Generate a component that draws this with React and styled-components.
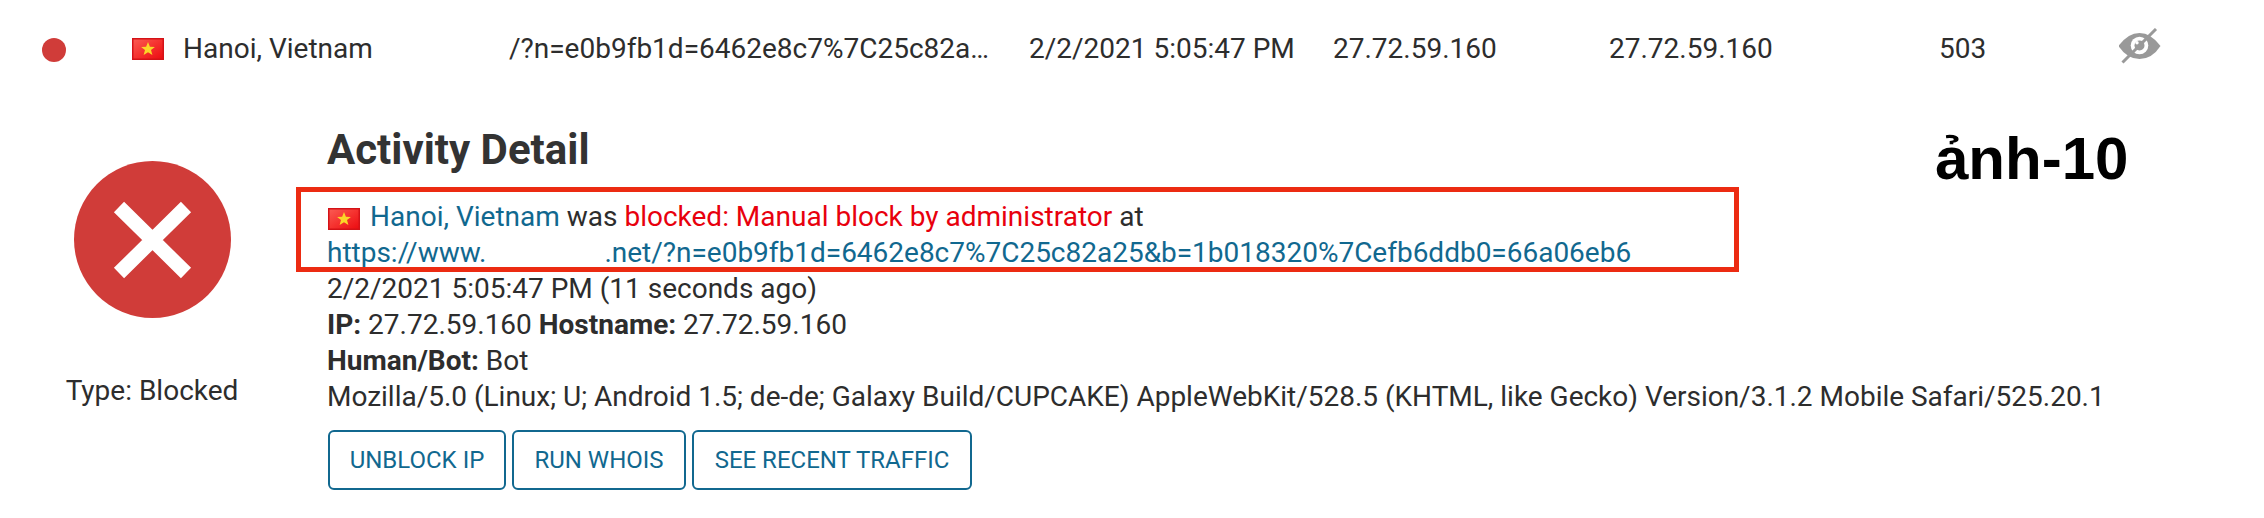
import React from "react";
import styled, { createGlobalStyle } from "styled-components";

const Global = createGlobalStyle`
  * { box-sizing: border-box; }
  body { margin: 0; background: #fff; }
`;

const Page = styled.main`
  position: relative;
  width: 2264px;
  height: 518px;
  overflow: hidden;
  background: #fff;
  color: #2d2d2d;
  font: 400 28px/36px Roboto, "Liberation Sans", sans-serif;
`;

const HitRow = styled.div`
  display: grid;
  grid-template-columns: 90px 377px 520px 304px 276px 330px 180px 1fr;
  align-items: center;
  height: 98px;
  padding-left: 42px;
`;

const Cell = styled.div`
  display: flex;
  align-items: center;
  gap: ${(p) => p.$gap || 0}px;
  white-space: nowrap;
`;

const Dot = styled.span`
  width: 24px;
  height: 24px;
  margin-top: 2px;
  border-radius: 50%;
  background: #d03c39;
`;

const FlagSvg = styled.svg`
  display: inline-block;
  width: 32px;
  height: 22px;
  flex: none;
  margin: ${(p) => p.$margin || "0"};
  vertical-align: -4px;
`;

const EyeSvg = styled.svg`
  width: 44px;
  height: 36px;
  margin-bottom: 6px;
`;

const DetailPanel = styled.section`
  display: flex;
`;

const TypeColumn = styled.aside`
  display: flex;
  flex-direction: column;
  align-items: center;
  width: 304px;
  padding-top: 63px;
`;

const BlockedSvg = styled.svg`
  width: 157px;
  height: 157px;
  margin-bottom: 55px;
`;

const Details = styled.div`
  padding: 27px 0 0 23px;
`;

const Title = styled.h2`
  margin: 0 0 24px;
  font-size: 42px;
  line-height: 50px;
  font-weight: 700;
  color: #333;
`;

const Line = styled.div`
  height: 36px;
  letter-spacing: ${(p) => p.$tracking || "normal"};
  white-space: nowrap;
`;

const Link = styled.a`
  color: #11688f;
`;

const Blocked = styled.span`
  color: #e8000d;
`;

const Redacted = styled.span`
  display: inline-block;
  width: 118px;
`;

const Actions = styled.div`
  display: flex;
  gap: 6px;
  margin: 15px 0 0 1px;
`;

const ActionButton = styled.button`
  width: ${(p) => p.$width}px;
  height: 60px;
  padding: 0;
  border: 2px solid #11688f;
  border-radius: 6px;
  background: #fff;
  color: #11688f;
  font: 400 24px/36px Roboto, sans-serif;
  text-transform: uppercase;
  white-space: nowrap;
`;

const Highlight = styled.div`
  position: absolute;
  left: 296px;
  top: 187px;
  width: 1443px;
  height: 85px;
  border: 5px solid #ec2b12;
`;

const Caption = styled.div`
  position: absolute;
  left: 1935px;
  top: 125px;
  color: #000;
  font: 700 60px/68px "Liberation Sans", sans-serif;
  white-space: nowrap;
`;

function Flag({ margin }) {
  return (
    <FlagSvg viewBox="0 0 32 22" $margin={margin}>
      <defs>
        <linearGradient id="flag" x1="0" y1="0" x2="1" y2="1">
          <stop offset="0" stopColor="#fa5a52" />
          <stop offset="0.5" stopColor="#f5322f" />
          <stop offset="1" stopColor="#ec0d12" />
        </linearGradient>
      </defs>
      <rect width="32" height="22" fill="#d41217" />
      <rect x="1.5" y="1.5" width="29" height="19" fill="url(#flag)" />
      <path d="M16 4l1.9 4.7 5 .3-3.9 3.1 1.4 5-4.4-2.8-4.4 2.8 1.4-5L9.100 9l5-.3z" fill="#fbd628" />
    </FlagSvg>
  );
}

function HiddenEye() {
  return (
    <EyeSvg viewBox="0 0 44 36">
      <path d="M-.5 18Q9 5 20.500 5T41.500 18Q33 31 20.500 31T-.5 18z" fill="#999" />
      <circle cx="20.500" cy="17.500" r="8.800" fill="#fff" />
      <circle cx="20.500" cy="17.500" r="5" fill="#999" />
      <circle cx="18" cy="14.800" r="1.700" fill="#fff" />
      <path d="M3.500 34.500L37 1" stroke="#999" strokeWidth="3" />
    </EyeSvg>
  );
}

export default function App() {
  return (
    <Page>
      <Global />
      <HitRow>
        <Cell><Dot /></Cell>
        <Cell $gap={19}><Flag />Hanoi, Vietnam</Cell>
        <Cell>/?n=e0b9fb1d=6462e8c7%7C25c82a…</Cell>
        <Cell>2/2/2021 5:05:47 PM</Cell>
        <Cell>27.72.59.160</Cell>
        <Cell>27.72.59.160</Cell>
        <Cell>503</Cell>
        <Cell><HiddenEye /></Cell>
      </HitRow>
      <DetailPanel>
        <TypeColumn>
          <BlockedSvg viewBox="0 0 157 157">
            <circle cx="78.5" cy="78.5" r="78.5" fill="#d03c39" />
            <path d="M45 46L112 112M112 46L45 112" stroke="#fff" strokeWidth="14.5" />
          </BlockedSvg>
          Type: Blocked
        </TypeColumn>
        <Details>
          <Title>Activity Detail</Title>
          <Line>
            <Flag margin="0 10px 0 1px" />
            <Link>Hanoi, Vietnam</Link> was <Blocked>blocked: Manual block by administrator</Blocked> at
          </Line>
          <Line $tracking="-0.01px">
            <Link>https://www.<Redacted />.net/?n=e0b9fb1d=6462e8c7%7C25c82a25&amp;b=1b018320%7Cefb6ddb0=66a06eb6</Link>
          </Line>
          <Line>2/2/2021 5:05:47 PM (11 seconds ago)</Line>
          <Line><b>IP:</b> 27.72.59.160 <b>Hostname:</b> 27.72.59.160</Line>
          <Line><b>Human/Bot:</b> Bot</Line>
          <Line $tracking="-0.01px">Mozilla/5.0 (Linux; U; Android 1.5; de-de; Galaxy Build/CUPCAKE) AppleWebKit/528.5 (KHTML, like Gecko) Version/3.1.2 Mobile Safari/525.20.1</Line>
          <Actions>
            <ActionButton $width={178}>Unblock IP</ActionButton>
            <ActionButton $width={174}>Run Whois</ActionButton>
            <ActionButton $width={280}>See Recent Traffic</ActionButton>
          </Actions>
        </Details>
      </DetailPanel>
      <Highlight />
      <Caption>ảnh-10</Caption>
    </Page>
  );
}
